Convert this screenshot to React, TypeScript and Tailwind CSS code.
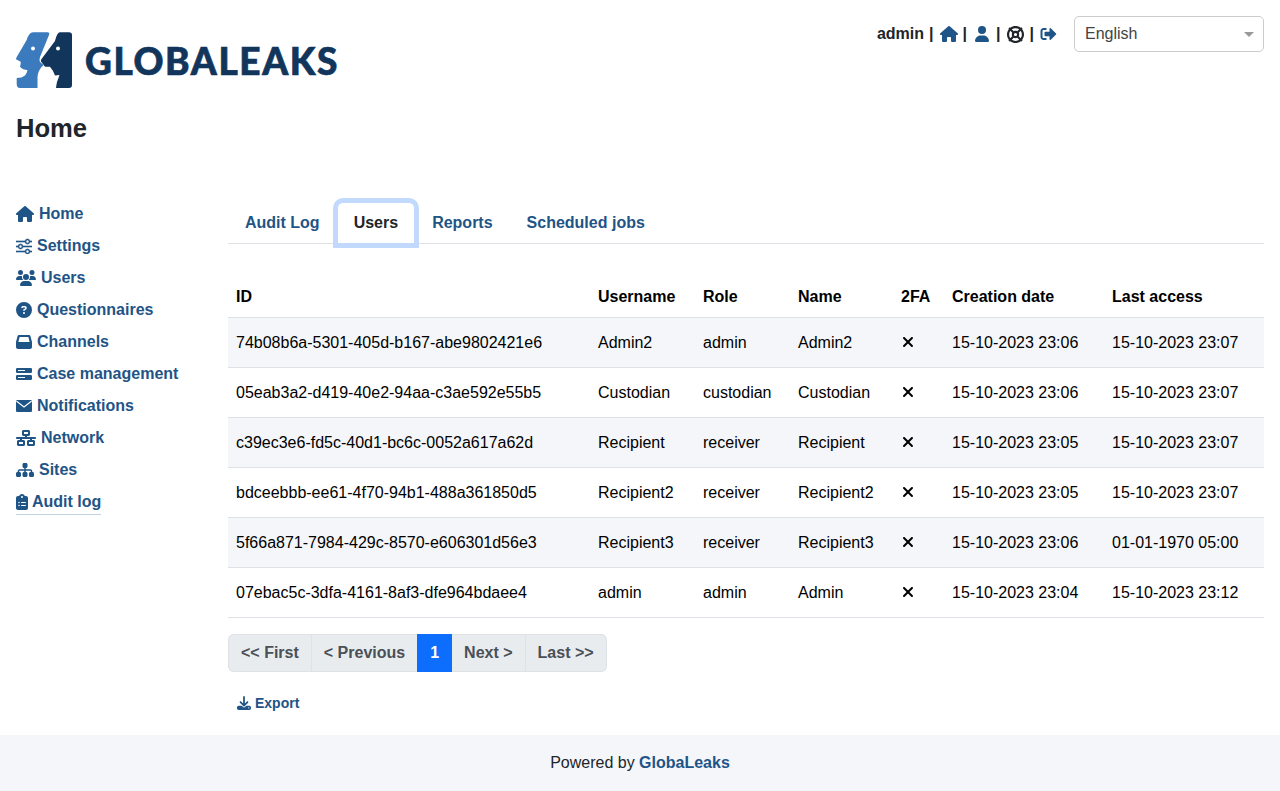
import type { ReactNode } from 'react'
import {
  FaHouse,
  FaUsers,
  FaCircleQuestion,
  FaNetworkWired,
  FaSitemap,
  FaClipboardList,
  FaDownload,
  FaXmark,
  FaUser,
  FaLifeRing,
} from 'react-icons/fa6'
import { FaSignOutAlt } from 'react-icons/fa'
import { BsSliders } from 'react-icons/bs'

function ServerIcon() {
  return (
    <svg width="16" height="12" viewBox="0 0 16 12" className="shrink-0">
      <rect x="0" y="0" width="16" height="5" rx="1.2" fill="currentColor" />
      <rect x="0" y="7" width="16" height="5" rx="1.2" fill="currentColor" />
      <rect x="2" y="2" width="7" height="1" fill="#fff" />
      <rect x="2" y="9" width="7" height="1" fill="#fff" />
    </svg>
  )
}

function InboxIcon() {
  return (
    <svg width="16" height="14" viewBox="0 0 16 14" className="shrink-0">
      <path d="M3 0 H13 Q14 0 14.4 1 L16 7 V12 Q16 14 14 14 H2 Q0 14 0 12 V7 L1.6 1 Q2 0 3 0 Z" fill="currentColor" />
      <path d="M3.6 2 H12.4 L13.6 7 H2.4 Z" fill="#fff" />
    </svg>
  )
}

function MailIcon() {
  return (
    <svg width="16" height="12" viewBox="0 0 16 12" className="shrink-0">
      <rect x="0" y="0" width="16" height="12" rx="1.2" fill="currentColor" />
      <path d="M0.3 1 L8 7 L15.7 1" fill="none" stroke="#fff" strokeWidth="1.2" />
    </svg>
  )
}

const NAV: { label: string; icon: ReactNode }[] = [
  { label: 'Home', icon: <FaHouse className="w-[18px] h-4" /> },
  { label: 'Settings', icon: <BsSliders className="w-4 h-4 stroke-current stroke-[0.6px]" /> },
  { label: 'Users', icon: <FaUsers className="w-5 h-4" /> },
  { label: 'Questionnaires', icon: <FaCircleQuestion className="w-4 h-4" /> },
  { label: 'Channels', icon: <InboxIcon /> },
  { label: 'Case management', icon: <ServerIcon /> },
  { label: 'Notifications', icon: <MailIcon /> },
  { label: 'Network', icon: <FaNetworkWired className="w-5 h-4" /> },
  { label: 'Sites', icon: <FaSitemap className="w-[18px] h-4" /> },
]

const TABS = ['Audit Log', 'Users', 'Reports', 'Scheduled jobs']

const USERS = [
  ['74b08b6a-5301-405d-b167-abe9802421e6', 'Admin2', 'admin', 'Admin2', '15-10-2023 23:06', '15-10-2023 23:07'],
  ['05eab3a2-d419-40e2-94aa-c3ae592e55b5', 'Custodian', 'custodian', 'Custodian', '15-10-2023 23:06', '15-10-2023 23:07'],
  ['c39ec3e6-fd5c-40d1-bc6c-0052a617a62d', 'Recipient', 'receiver', 'Recipient', '15-10-2023 23:05', '15-10-2023 23:07'],
  ['bdceebbb-ee61-4f70-94b1-488a361850d5', 'Recipient2', 'receiver', 'Recipient2', '15-10-2023 23:05', '15-10-2023 23:07'],
  ['5f66a871-7984-429c-8570-e606301d56e3', 'Recipient3', 'receiver', 'Recipient3', '15-10-2023 23:06', '01-01-1970 05:00'],
  ['07ebac5c-3dfa-4161-8af3-dfe964bdaee4', 'admin', 'admin', 'Admin', '15-10-2023 23:04', '15-10-2023 23:12'],
]

const PAGES = [
  { label: '<< First', cls: 'pl-[13px] pr-3' },
  { label: '< Previous', cls: 'px-3 border-l border-[#dee2e6]' },
  { label: '1', cls: 'px-[13px] bg-[#0d6efd] text-white' },
  { label: 'Next >', cls: 'px-3' },
  { label: 'Last >>', cls: 'pl-3 pr-[13px] border-l border-[#dee2e6]' },
]

function Logo() {
  return (
    <svg width="56" height="56" viewBox="0 0 56 56" className="shrink-0">
      <path
        d="M17 0.3 H31.5 Q34 0.3 33 3 L24 25 Q23 28 24 30 L27.5 33 Q22 38 21.5 45 V56 H4 Q0.7 56 0.7 52 V46 Q6 46 9 43.5 Q11 41 11.5 38 Q7 38 4 34.7 Q5 32 4.7 29.7 L0 27.3 Q0 26 1 24.5 L10.7 8 Q13 0.3 17 0.3 Z"
        fill="#3a7abd"
      />
      <path
        d="M44 0.3 H53 Q56 0.3 56 3 V53 Q56 56 53 56 H40 Q40.5 52 41 50 L43.5 43 L39 43.5 Q37 38 34 34.7 L29 34.7 L25 29.5 Q24.5 28 25.5 27 L33 17 L39 9 Q41 0.3 44 0.3 Z"
        fill="#12355b"
      />
      <circle cx="17" cy="16.5" r="2" fill="#fff" />
      <circle cx="42" cy="16.5" r="2" fill="#fff" />
    </svg>
  )
}

export default function App() {
  return (
    <div className="min-h-[791px] flex flex-col bg-white text-[#212529] text-base font-['Liberation_Sans',Arial,sans-serif]">
      {/* Header */}
      <div className="flex justify-between items-start px-4">
        <div className="flex items-center mt-8 h-14">
          <Logo />
          <span className="ml-[13px] font-['Lato',sans-serif] font-black text-[37px] leading-none tracking-[1.6px] [-webkit-text-stroke:0.7px_#12355b] text-[#12355b]">
            GLOBALEAKS
          </span>
        </div>
        <div className="flex items-center mt-4 h-9">
          <div className="flex items-center font-bold text-[#212529] mr-[17px]">
            <span>admin</span>
            <span className="ml-[5px]">|</span>
            <FaHouse className="w-[18px] h-4 text-[#1f5486] ml-[6px]" />
            <span className="ml-[5px]">|</span>
            <FaUser className="w-4 h-4 text-[#1f5486] ml-[7px]" />
            <span className="ml-[6px]">|</span>
            <FaLifeRing className="w-[17px] h-[17px] text-[#212529] ml-[6px]" />
            <span className="ml-[6px]">|</span>
            <FaSignOutAlt className="w-[17px] h-4 text-[#1f5486] ml-[6px]" />
          </div>
          <div className="relative w-[190px] h-9 border border-[#cccccc] rounded-[5px] flex items-center pl-[10px] text-[#444444]">
            English
            <span className="absolute right-[9px] top-[15px] w-0 h-0 border-x-[5px] border-x-transparent border-t-[5px] border-t-[#999999]" />
          </div>
        </div>
      </div>

      <h1 className="px-4 mt-[25px] text-[25.6px] leading-[31px] font-bold">Home</h1>

      <div className="flex px-4 mt-[54px]">
        {/* Sidebar */}
        <div className="w-[212px] shrink-0 font-bold text-[#1f5486]">
          {NAV.map(n => (
            <div key={n.label} className="h-8 flex items-center gap-[5px]">
              {n.icon}
              <span>{n.label}</span>
            </div>
          ))}
          <div className="h-8 flex items-start">
            <div className="flex items-center gap-1 h-[25px] mt-1 border-b border-[#c3d2e3]">
              <FaClipboardList className="w-3 h-4" />
              <span>Audit log</span>
            </div>
          </div>
        </div>

        {/* Main */}
        <div className="flex-1 min-w-0 pt-[4px]">
          <div className="flex h-[42px] border-b border-[#dee2e6] font-bold">
            {TABS.map(t =>
              t === 'Users' ? (
                <div
                  key={t}
                  className="relative z-10 h-[42px] px-4 flex items-center border border-[#c2d9fe] rounded-t-[6px] bg-white text-[#212529] shadow-[0_0_0_4px_#c2d9fe]"
                >
                  {t}
                </div>
              ) : (
                <div key={t} className="h-[41px] px-[17px] flex items-center text-[#1f5486]">
                  {t}
                </div>
              ),
            )}
          </div>

          <table className="mt-8 w-full table-fixed border-collapse text-black">
            <colgroup>
              <col className="w-[362px]" />
              <col className="w-[105px]" />
              <col className="w-[95px]" />
              <col className="w-[103px]" />
              <col className="w-[51px]" />
              <col className="w-[160px]" />
              <col />
            </colgroup>
            <thead>
              <tr className="h-[41px] font-bold text-left">
                {['ID', 'Username', 'Role', 'Name', '2FA', 'Creation date', 'Last access'].map(h => (
                  <th key={h} className="px-2 pt-px font-bold whitespace-nowrap">{h}</th>
                ))}
              </tr>
            </thead>
            <tbody>
              {USERS.map((u, i) => (
                <tr key={u[0]} className={`h-[50px] border-y border-[#dee2e6] ${i % 2 === 0 ? 'bg-[#f4f6f9]' : 'bg-white'}`}>
                  <td className="px-2 pt-[2px] whitespace-nowrap">{u[0]}</td>
                  <td className="px-2 pt-[2px] whitespace-nowrap">{u[1]}</td>
                  <td className="px-2 pt-[2px] whitespace-nowrap">{u[2]}</td>
                  <td className="px-2 pt-[2px] whitespace-nowrap">{u[3]}</td>
                  <td className="px-2"><FaXmark className="w-4 h-4 -ml-px" /></td>
                  <td className="px-2 pt-[2px] whitespace-nowrap">{u[4]}</td>
                  <td className="px-2 pt-[2px] whitespace-nowrap">{u[5]}</td>
                </tr>
              ))}
            </tbody>
          </table>

          <div className="mt-4 inline-flex h-[38px] rounded-[6px] shadow-[inset_0_0_0_1px_#dee2e6] bg-[#e9ecef] font-bold text-[#495057] overflow-hidden">
            {PAGES.map(p => (
              <div key={p.label} className={`flex items-center ${p.cls}`}>
                {p.label}
              </div>
            ))}
          </div>

          <div className="mt-[21px] ml-[9px] flex items-center gap-1 h-5 text-sm font-bold text-[#1f5486]">
            <FaDownload className="w-3.5 h-3.5" />
            <span>Export</span>
          </div>
        </div>
      </div>

      {/* Footer */}
      <div className="mt-auto h-14 bg-[#f4f6fa] flex items-center justify-center text-[#212529]">
        <span>Powered by <span className="font-bold text-[#1f5486]">GlobaLeaks</span></span>
      </div>
    </div>
  )
}
